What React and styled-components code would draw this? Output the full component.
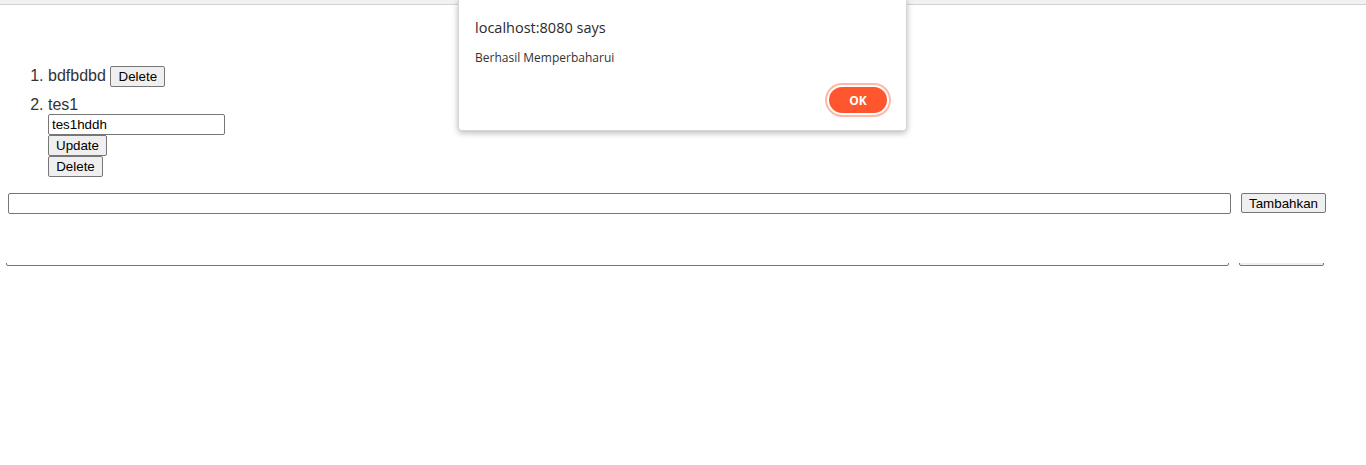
import React from "react";
import styled, { createGlobalStyle } from "styled-components";

const Global = createGlobalStyle`
    body {
        margin: 0;
        background: #ffffff;
        font-family: "Liberation Sans", Arial, sans-serif;
    }
`;

const Shell = styled.div`
    position: relative;
`;

const TopStrip = styled.div`
    height: 4px;
    background: #f1f1f1;
    border-bottom: 1px solid #cfd3d8;
`;

const Page = styled.main`
    padding: 45px 8px 0;
`;

const List = styled.ol`
    margin: 16px 0;
    padding-left: 40px;
    color: #333333;
    font-size: 16px;
`;

const Item = styled.li`
    margin-bottom: ${(p) => p.$gap || 0}px;
`;

const Stack = styled.div`
    display: flex;
    flex-direction: column;
    align-items: flex-start;
`;

const Button = styled.button`
    font-family: "Liberation Sans", Arial, sans-serif;
    font-size: 13.33px;
    color: #000000;
    background: #efefef;
    border: 1px solid #767676;
    border-radius: 2px;
    padding: 1px 7px;
    height: ${(p) => p.$h || 21}px;
    min-width: ${(p) => p.$w || 0}px;
    vertical-align: baseline;
`;

const Field = styled.input`
    font-family: "Liberation Sans", Arial, sans-serif;
    font-size: 13.33px;
    color: #000000;
    border: 1px solid #767676;
    border-radius: 2px;
    padding: 1px 3px;
    height: 21px;
    box-sizing: border-box;
    width: ${(p) => p.$w}px;
`;

const Row = styled.div`
    display: flex;
    align-items: flex-start;
    gap: 10px;
`;

const ClippedRow = styled.div`
    display: flex;
    align-items: flex-end;
    gap: 10px;
    height: 3px;
    overflow: hidden;
    margin: 49px 0 0 -2px;
`;

const Dialog = styled.div`
    position: absolute;
    top: 0;
    left: 458px;
    width: 449px;
    height: 131px;
    box-sizing: border-box;
    background: #ffffff;
    border: 1px solid #d6d6d6;
    border-top: none;
    border-radius: 0 0 4px 4px;
    box-shadow: 0 2px 6px rgba(0, 0, 0, 0.28);
    padding: 18px 16px 0 16px;
    font-family: "Open Sans", "Noto Sans", sans-serif;
    display: flex;
    flex-direction: column;
`;

const Title = styled.div`
    font-size: 14.5px;
    color: #2b2b2b;
    line-height: 20px;
`;

const Message = styled.div`
    margin-top: 12px;
    font-size: 12px;
    color: #333333;
    line-height: 16px;
`;

const Actions = styled.div`
    display: flex;
    justify-content: flex-end;
    margin-top: 19px;
    padding-right: 1px;
`;

const OkButton = styled.button`
    width: 62px;
    height: 30px;
    border-radius: 15px;
    background: #ff5630;
    border: 2px solid #ffffff;
    box-shadow: 0 0 0 2px #ffb8a6;
    color: #ffffff;
    font-family: "Open Sans", "Noto Sans", sans-serif;
    font-weight: 700;
    font-size: 12px;
`;

const App = () => {
    return (
        <Shell>
            <Global />
            <TopStrip />
            <Page>
                <List>
                    <Item $gap={9}>
                        bdfbdbd <Button $w={55}>Delete</Button>
                    </Item>
                    <Item>
                        tes1
                        <Stack>
                            <Field $w={177} defaultValue="tes1hddh" />
                            <Button $w={59}>Update</Button>
                            <Button $w={55}>Delete</Button>
                        </Stack>
                    </Item>
                </List>
                <Row>
                    <Field $w={1223} />
                    <Button $h={20} $w={85}>Tambahkan</Button>
                </Row>
                <ClippedRow>
                    <Field $w={1223} />
                    <Button $h={20} $w={85} aria-hidden="true" />
                </ClippedRow>
            </Page>
            <Dialog>
                <Title>localhost:8080 says</Title>
                <Message>Berhasil Memperbaharui</Message>
                <Actions>
                    <OkButton>OK</OkButton>
                </Actions>
            </Dialog>
        </Shell>
    );
};

export default App;
